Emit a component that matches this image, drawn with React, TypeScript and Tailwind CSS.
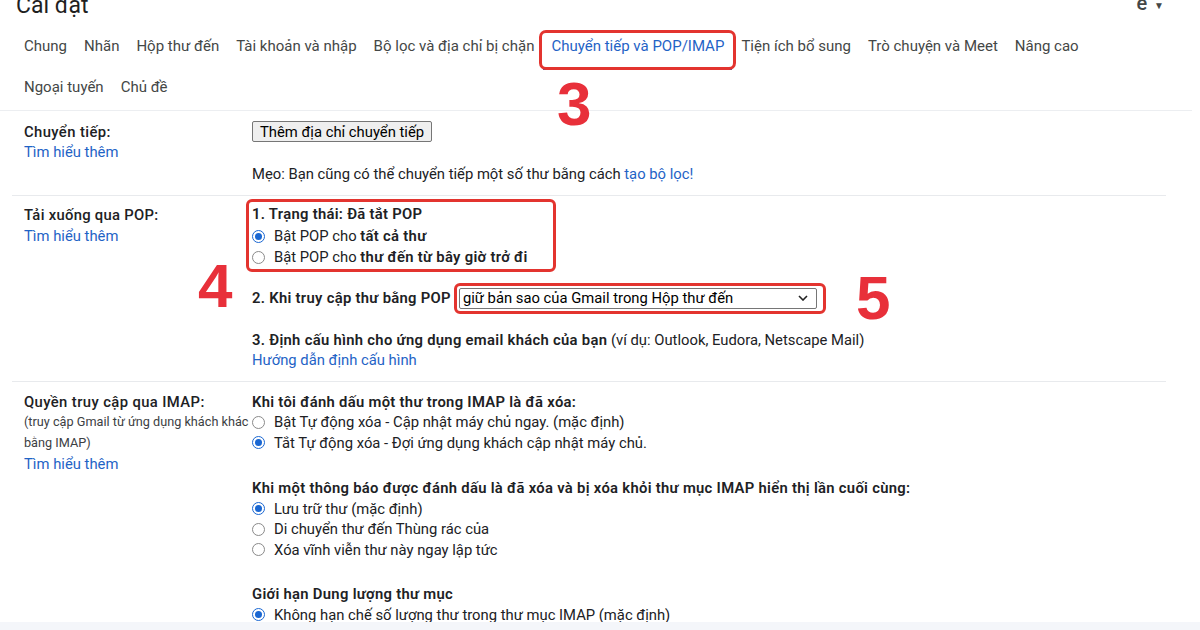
import React from 'react';

const row1 = [
  'Chung',
  'Nhãn',
  'Hộp thư đến',
  'Tài khoản và nhập',
  'Bộ lọc và địa chỉ bị chặn',
  'Chuyển tiếp và POP/IMAP',
  'Tiện ích bổ sung',
  'Trò chuyện và Meet',
  'Nâng cao',
];
const row2 = ['Ngoại tuyến', 'Chủ đề'];

const Radio = ({ checked }: { checked?: boolean }) =>
  checked ? (
    <span className="w-[13px] h-[13px] rounded-full border-[1.5px] border-[#1a67d2] flex items-center justify-center shrink-0">
      <span className="w-[7px] h-[7px] rounded-full bg-[#1a67d2]" />
    </span>
  ) : (
    <span className="w-[13px] h-[13px] rounded-full border border-[#8a8a8a] shrink-0" />
  );

const Option = ({ checked, tall, children }: { checked?: boolean; tall?: boolean; children: React.ReactNode }) => (
  <div className={tall ? 'flex items-center gap-[9px] h-[21.5px]' : 'flex items-center gap-[9px] h-[20.5px]'}>
    <Radio checked={checked} />
    <span>{children}</span>
  </div>
);

const Link = ({ children }: { children: React.ReactNode }) => (
  <span className="text-[#1f63c6]">{children}</span>
);

const B = ({ children }: { children: React.ReactNode }) => (
  <b className="font-semibold tracking-[0.3px]">{children}</b>
);

const Tab = ({ label }: { label: string }) => {
  const active = label === 'Chuyển tiếp và POP/IMAP';
  return (
    <div className="relative h-[41px] flex items-center px-[8px]">
      <span className={active ? 'text-[#1f63c6]' : ''}>{label}</span>
      {active && (
        <>
          <span className="absolute left-0 right-0 bottom-[-3px] h-[2px] bg-[#1f63c6]" />
          <span className="absolute -left-[4px] -right-[4px] top-[4px] bottom-[-3px] border-[3px] border-[#e3342f] rounded-[7px]" />
        </>
      )}
    </div>
  );
};

const App = () => {
  return (
    <div className="w-[1200px] h-[630px] overflow-hidden bg-white relative font-['Roboto','Noto_Sans',sans-serif] text-[14.8px] text-[#202124]">
      <div className="h-[622px] overflow-hidden">
        {/* header */}
        <div className="flex justify-between pl-[16px] pr-[36px] h-[26px]">
          <h1 className="text-[23px] leading-[28px] -mt-[8px] text-[#1f1f1f]">Cài đặt</h1>
          <div className="flex items-start gap-[7px] -mt-[7px] text-[#444746]">
            <span className="text-[20px] leading-[20px] font-medium">e</span>
            <span className="text-[10px] mt-[5px]">▼</span>
          </div>
        </div>

        {/* tabs */}
        <div className="border-b border-[#eceef1] w-[1192px] pl-[16px] pb-[2px] text-[#444746] text-[15px]">
          <div className="flex gap-x-[1px]">
            {row1.map((t) => (
              <Tab key={t} label={t} />
            ))}
          </div>
          <div className="flex gap-x-[1px]">
            {row2.map((t) => (
              <Tab key={t} label={t} />
            ))}
          </div>
        </div>

        {/* sections */}
        <div className="ml-[12px] w-[1154px] relative">
          {/* forwarding */}
          <div className="flex pl-[12px] pt-[10px] pb-[11px] leading-[20px] border-b border-[#e8eaed]">
            <div className="w-[228px] shrink-0 pt-[1px]">
              <div className="font-medium tracking-[0.4px]">Chuyển tiếp:</div>
              <div><Link>Tìm hiểu thêm</Link></div>
            </div>
            <div>
              <div className="inline-flex items-center h-[21px] px-[7px] bg-[#efefef] border border-[#767676] rounded-[2px] text-black">
                Thêm địa chỉ chuyển tiếp
              </div>
              <div className="mt-[22px]">
                Mẹo: Bạn cũng có thể chuyển tiếp một số thư bằng cách <Link>tạo bộ lọc!</Link>
              </div>
            </div>
          </div>

          {/* POP */}
          <div className="flex pl-[12px] pt-[3px] pb-[11px] border-b border-[#e8eaed]">
            <div className="w-[228px] shrink-0 pt-[6px] leading-[21px]">
              <div className="font-medium tracking-[0.3px]">Tải xuống qua POP:</div>
              <div><Link>Tìm hiểu thêm</Link></div>
            </div>
            <div className="relative">
              <div className="-ml-[6px] w-[310px] border-[3px] border-[#e3342f] rounded-[6px] pl-[3px] pt-[2px] leading-[21.5px]">
                <div><B>1. Trạng thái: Đã tắt POP</B></div>
                <Option checked tall>
                  Bật POP cho <B>tất cả thư</B>
                </Option>
                <Option tall>
                  Bật POP cho <B>thư đến từ bây giờ trở đi</B>
                </Option>
              </div>
              <div className="flex items-center mt-[11px]">
                <B>2. Khi truy cập thư bằng POP</B>
                <div className="ml-[3px] border-[3px] border-[#e3342f] rounded-[6px] pl-[2px] pr-[6px] py-[2px]">
                  <div className="w-[358px] h-[21px] border border-[#767676] rounded-[2px] flex items-center justify-between pl-[3px] pr-[8px] text-black">
                    <span>giữ bản sao của Gmail trong Hộp thư đến</span>
                    <svg width="10" height="6" viewBox="0 0 10 6" fill="none" stroke="#222" strokeWidth="1.6">
                      <path d="M1 1l4 4 4-4" />
                    </svg>
                  </div>
                </div>
              </div>
              <div className="mt-[16px] leading-[20px]">
                <B>3. Định cấu hình cho ứng dụng email khách của bạn</B> (ví dụ: Outlook, Eudora, Netscape Mail)
              </div>
              <div className="leading-[20px]"><Link>Hướng dẫn định cấu hình</Link></div>
              <span className="absolute -left-[54px] top-[56px] text-[62px] leading-[62px] font-bold text-[#e8303a] font-['Liberation_Sans',sans-serif]">4</span>
              <span className="absolute left-[604px] top-[68px] text-[62px] leading-[62px] font-bold text-[#e8303a] font-['Liberation_Sans',sans-serif]">5</span>
            </div>
          </div>

          {/* IMAP */}
          <div className="flex pl-[12px] pt-[10px] leading-[20.5px]">
            <div className="w-[228px] shrink-0">
              <div className="font-medium tracking-[0.4px]">Quyền truy cập qua IMAP:</div>
              <div className="text-[12.7px] leading-[20.5px] text-[#3c4043]">(truy cập Gmail từ ứng dụng khách khác</div>
              <div className="text-[12.7px] leading-[20.5px] text-[#3c4043]">bằng IMAP)</div>
              <div className="mt-[1px]"><Link>Tìm hiểu thêm</Link></div>
            </div>
            <div>
              <div><B>Khi tôi đánh dấu một thư trong IMAP là đã xóa:</B></div>
              <Option>Bật Tự động xóa - Cập nhật máy chủ ngay. (mặc định)</Option>
              <Option checked>Tắt Tự động xóa - Đợi ứng dụng khách cập nhật máy chủ.</Option>
              <div className="mt-[25px]">
                <B>Khi một thông báo được đánh dấu là đã xóa và bị xóa khỏi thư mục IMAP hiển thị lần cuối cùng:</B>
              </div>
              <Option checked>Lưu trữ thư (mặc định)</Option>
              <Option>Di chuyển thư đến Thùng rác của</Option>
              <Option>Xóa vĩnh viễn thư này ngay lập tức</Option>
              <div className="mt-[24px]"><B>Giới hạn Dung lượng thư mục</B></div>
              <Option checked>Không hạn chế số lượng thư trong thư mục IMAP (mặc định)</Option>
            </div>
          </div>

          <span className="absolute left-[545px] -top-[38px] text-[62px] leading-[62px] font-bold text-[#e8303a] font-['Liberation_Sans',sans-serif]">3</span>
        </div>
      </div>
      <div className="h-[8px] bg-[#f4f6fa]" />
    </div>
  );
};

export default App;
